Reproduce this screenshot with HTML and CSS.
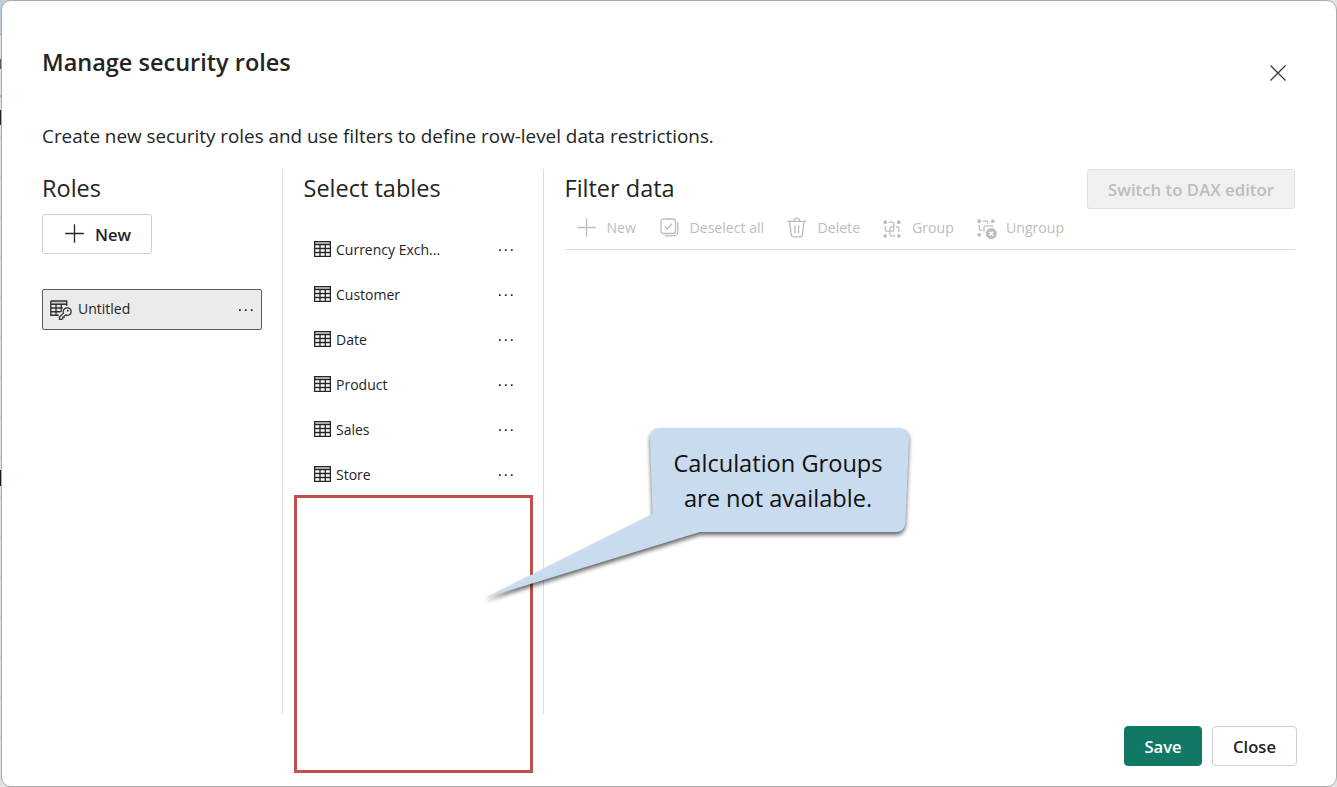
FILE: index.html
```html
<!DOCTYPE html>
<html lang="en">
<head>
<meta charset="utf-8">
<title>Manage security roles</title>
<link rel="stylesheet" href="styles.css">
</head>
<body>
<svg class="defs" width="0" height="0" aria-hidden="true">
  <symbol id="grid" viewBox="0 0 17 16"><path d="M.6.6h15.8v2.900H.6z" fill="#d8d8d8"/><path d="M.6.6h15.800v14.800H.6zM.5 3.500h16M.5 7.500h16M.5 11.500h16M6 3.500v12M11.300 3.500v12" fill="none" stroke="currentColor" stroke-width="1.300"/></symbol>
  <symbol id="dots" viewBox="0 0 16 4"><path d="M1 1.200h1.700v1.700H1zM6.900 1.200h1.700v1.700H6.900zM12.900 1.200h1.700v1.700h-1.700z" fill="currentColor"/></symbol>
  <symbol id="plus" viewBox="0 0 19 19"><path d="M9.500.2v18.600M.2 9.500h18.600" fill="none" stroke="currentColor" stroke-width="1.3"/></symbol>
  <symbol id="nodes" viewBox="0 0 21 21"><g fill="currentColor"><circle cx="2.200" cy="2.200" r="1.900"/><circle cx="15.800" cy="2.200" r="1.900"/><circle cx="2.200" cy="15.800" r="1.900"/></g></symbol>
</svg>
<div class="backdrop">
  <div class="strip"><i class="mark m1"></i><i class="mark m2"></i><i class="mark m3"></i><i class="mark m4"></i></div>
  <main class="dialog">
    <header class="head">
      <h1 class="title">Manage security roles</h1>
      <svg class="dismiss" width="16" height="16" viewBox="0 0 16 16"><path d="M.5.5l15 15M15.500.5l-15 15" fill="none" stroke="#333" stroke-width="1.2"/></svg>
    </header>
    <p class="desc">Create new security roles and use filters to define row-level data restrictions.</p>
    <div class="columns">
      <section class="col roles">
        <h2 class="heading h-roles">Roles</h2>
        <button class="btn new"><svg width="19" height="19"><use href="#plus"/></svg><span>New</span></button>
        <div class="role">
          <svg class="role-icon" width="22" height="20" viewBox="0 0 22 20"><path d="M.8 1h16v3H.8z" fill="#ccc"/><path d="M.8 1h15.900v5M.8 1v14.300h8M.8 4.200h15.900M.8 8h12M.8 11.700h10M6 4.200v11.100M11.300 4.200v7.500" fill="none" stroke="#333" stroke-width="1.400"/><path d="M16.900 8a3.700 3.700 0 1 1-1.200 6.900l-1.500 1.100v1.200h-1.500v1.500l-1.100.7H9.500v-2.300l3.900-4A3.700 3.700 0 0 1 16.900 8z" fill="#ebebeb" stroke="#ebebeb" stroke-width="3"/><path d="M16.900 8a3.700 3.700 0 1 1-1.200 6.900l-1.500 1.100v1.200h-1.500v1.500l-1.100.7H9.500v-2.300l3.900-4A3.700 3.700 0 0 1 16.900 8z" fill="#ebebeb" stroke="#333" stroke-width="1.300"/><circle cx="17.800" cy="10.700" r=".9" fill="#333"/></svg>
          <span class="label">Untitled</span><svg class="more" width="16" height="4"><use href="#dots"/></svg>
        </div>
      </section>
      <section class="col tables">
        <h2 class="heading h-tables">Select tables</h2>
        <ul class="list">
          <li><svg class="table-icon" width="17" height="16"><use href="#grid"/></svg><span class="label">Currency Exch...</span><svg class="more" width="16" height="4"><use href="#dots"/></svg></li>
          <li><svg class="table-icon" width="17" height="16"><use href="#grid"/></svg><span class="label">Customer</span><svg class="more" width="16" height="4"><use href="#dots"/></svg></li>
          <li><svg class="table-icon" width="17" height="16"><use href="#grid"/></svg><span class="label">Date</span><svg class="more" width="16" height="4"><use href="#dots"/></svg></li>
          <li><svg class="table-icon" width="17" height="16"><use href="#grid"/></svg><span class="label">Product</span><svg class="more" width="16" height="4"><use href="#dots"/></svg></li>
          <li><svg class="table-icon" width="17" height="16"><use href="#grid"/></svg><span class="label">Sales</span><svg class="more" width="16" height="4"><use href="#dots"/></svg></li>
          <li><svg class="table-icon" width="17" height="16"><use href="#grid"/></svg><span class="label">Store</span><svg class="more" width="16" height="4"><use href="#dots"/></svg></li>
        </ul>
      </section>
      <section class="col filter">
        <div class="filter-head">
          <h2 class="heading h-filter">Filter data</h2>
          <button class="btn dax" disabled>Switch to DAX editor</button>
        </div>
        <div class="toolbar">
          <div class="tool"><svg width="19" height="19"><use href="#plus"/></svg><span>New</span></div>
          <div class="tool"><svg width="19" height="19" viewBox="0 0 19 19" fill="none" stroke="currentColor" stroke-width="1.300"><rect x="1" y="1" width="14.500" height="14.500" rx="2.600"/><path d="M4.800 8.400l2.500 2.600 4.800-5.200M17.800 4v9.500a4.300 4.300 0 0 1-4.300 4.300H4.500"/></svg><span>Deselect all</span></div>
          <div class="tool"><svg width="20" height="21" viewBox="0 0 20 21" fill="none" stroke="currentColor" stroke-width="1.300"><path d="M.3 4.400h19M7 4.200c0-4 5.600-4 5.600 0M2.500 4.400l1.800 13.400q.3 2.100 2.100 2.100h6.800q1.800 0 2.100-2.100l1.800-13.400M8 8.300v8M11.600 8.300v8"/></svg><span>Delete</span></div>
          <div class="tool"><svg width="18" height="18" viewBox="0 0 18 18"><use href="#nodes" width="21" height="21"/><circle cx="15.800" cy="15.800" r="1.900" fill="currentColor"/><path d="M5.500 2.200h4q1.300 0 1.300 1.300v6.300q0 1.300-1.300 1.300h-6q-1.300 0-1.300-1.300V6M13 6.800h1.500q1.300 0 1.300 1.300V12M10.800 6.800H8.300Q7 6.800 7 8.100v6.400q0 1.300 1.300 1.300h3.900" fill="none" stroke="currentColor" stroke-width="1.200"/></svg><span>Group</span></div>
          <div class="tool"><svg width="21" height="21" viewBox="0 0 21 21"><use href="#nodes" width="21" height="21"/><path d="M5.500 2.200h4q1.300 0 1.300 1.300v1.300M2.200 6v3.800q0 1.300 1.300 1.300h1.800M15.800 8.100q0-1.300-1.300-1.300H8.300Q7 6.800 7 8.100v5.500" fill="none" stroke="currentColor" stroke-width="1.200"/><circle cx="14.300" cy="14.600" r="5.500" fill="currentColor"/><path d="M12.400 12.700l3.800 3.800m0-3.800l-3.800 3.800" stroke="#fff" stroke-width="1.500"/></svg><span>Ungroup</span></div>
        </div>
      </section>
    </div>
    <footer class="foot"><button class="btn save">Save</button><button class="btn close">Close</button></footer>
  </main>
  <div class="highlight"></div>
  <div class="callout">
    <svg width="440" height="190" viewBox="0 0 440 190"><path d="M190 8h239q10 0 10 10l-3.500 84q-.5 10-10 10H230L15 178l167.500-84L180 18q0-10 10-10z" fill="#c9dbee"/></svg>
    <p class="callout-text"><span>Calculation Groups</span><br><span>are not available.</span></p>
  </div>
</div>
</body>
</html>
```
FILE: styles.css
```css
* { box-sizing: border-box; }
body { margin: 0; font-family: "Open Sans", "Noto Sans", sans-serif; color: #242424; overflow: hidden; }
h1, h2, p, ul { margin: 0; padding: 0; font-weight: 400; }
svg { display: block; flex: none; overflow: visible; }
.defs { position: absolute; }

.backdrop { position: relative; width: 1337px; height: 787px; padding-left: 1px; background: linear-gradient(90deg, #b8cedd 700px, #e2e2e2 740px); }
.strip { position: absolute; left: 0; top: 0; width: 8px; height: 787px; background: linear-gradient(#b9cddc 34px, #7593ab 34px 35px, transparent 35px), repeating-linear-gradient(#e2e2e2 0 39px, #c6c6c6 39px 40px); background-position: 0 0, 0 -22px; background-size: 8px 787px, 8px 840px; background-repeat: no-repeat; }
.mark { position: absolute; left: 0; width: 2px; background: #1c1c1c; }
.m1 { top: 59px; height: 10px; width: 1px; background: #555; }
.m2 { top: 95px; height: 2px; background: #e0935c; }
.m3 { top: 110px; height: 15px; background: #26211f; }
.m4 { top: 470px; height: 16px; background: #241516; }

.dialog { position: relative; display: flex; flex-direction: column; height: 787px; padding: 0 40px; background: #fff; border: 1px solid #a9abad; border-radius: 10px; }
.head { display: flex; justify-content: space-between; height: 116px; padding-top: 45px; }
.title { font-size: 23.500px; line-height: 32px; font-weight: 600; white-space: nowrap; }
.dismiss { margin: 19px 10.500px 0 0; }
.desc { height: 52px; font-size: 18.860px; line-height: 38px; white-space: nowrap; }
.columns { display: grid; grid-template-columns: 241px 261px 751px; height: 545px; }
.roles, .tables { border-right: 1px solid #dcdcdc; }
.tables { padding-left: 20.500px; }
.filter { padding-left: 21px; }
.heading { font-size: 23.500px; line-height: 38px; white-space: nowrap; }
.h-filter { margin-left: -.5px; }

.btn { display: flex; align-items: center; justify-content: center; height: 40px; padding: 0; font: 600 16.600px "Open Sans", "Noto Sans", sans-serif; color: #242424; background: #fff; border: 1px solid #cfcfcf; border-radius: 3px; white-space: nowrap; }
.new { width: 110px; gap: 11px; margin-top: 7px; padding-left: 2px; }
.new svg { margin-top: -2px; }
.role { display: flex; align-items: center; width: 220px; height: 41px; margin-top: 35px; padding: 0 7px 2px 7px; background: #ebebeb; border: 1px solid #5c5c5c; border-radius: 2px; }
.role-icon { margin-top: 3px; }
.label { font-size: 14px; line-height: 20px; white-space: nowrap; }
.role .label { margin-left: 6px; }
.role .more { margin-top: 3px; }
.more { margin-left: auto; }
.list { list-style: none; margin-top: 20px; }
.list li { display: flex; align-items: center; height: 45px; padding: 0 29.500px 0 10.500px; }
.table-icon { margin-top: -1px; }
.list .label { margin-left: 5px; }

.filter-head { display: flex; justify-content: space-between; height: 40px; }
.dax { width: 208px; font-size: 16.800px; color: #bdbdbd; background: #f0f0f0; border-color: #e0e0e0; }
.toolbar { display: grid; grid-template-columns: 83px 127px 97px 94px 100px; height: 41px; padding: 0 0 3px 11.500px; border-bottom: 1px solid #dcdcdc; color: #bdbdbd; }
.tool { display: flex; align-items: center; gap: 11px; font-size: 14.100px; white-space: nowrap; }
.tool:nth-child(4) svg { margin: 2px 0 0 -.5px; }
.tool:last-child svg { margin: 3px 0 0 -.5px; }
.tool:last-child { gap: 8px; }

.foot { display: flex; justify-content: flex-end; gap: 10px; margin: 12px -1px 0 0; }
.save { width: 78px; color: #fff; background: #117865; border-color: #117865; border-radius: 4px; }
.close { width: 85px; border-radius: 4px; }

.highlight { position: absolute; left: 294px; top: 495px; width: 239px; height: 278px; border: 3px solid #c0504d; }
.callout { position: absolute; left: 470px; top: 420px; width: 440px; height: 190px; }
.callout svg { filter: drop-shadow(0 3px 2px rgba(0, 0, 0, .6)); }
.callout-text { position: absolute; left: 180px; top: 26px; width: 256px; font-size: 23.600px; line-height: 35px; text-align: center; color: #111; white-space: nowrap; }
```
